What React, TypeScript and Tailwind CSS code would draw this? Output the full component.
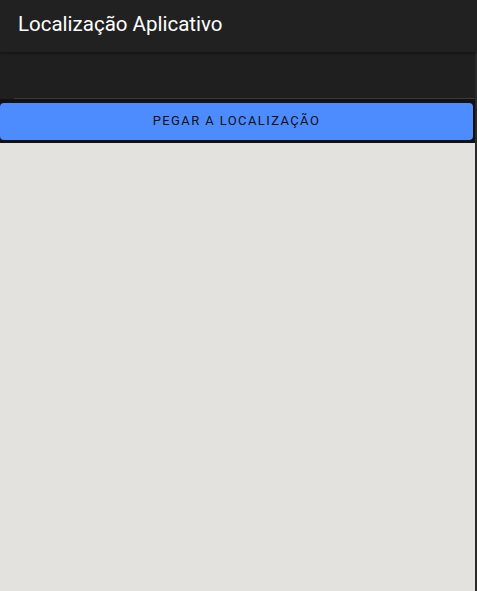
export default function App() {
  return (
    <div
      className="h-[591px] w-[477px] flex flex-col bg-[#1f1f1f] overflow-hidden"
      style={{ fontFamily: "Roboto, 'Liberation Sans', sans-serif" }}
    >
      <header className="h-[52px] flex-none flex items-center px-[18px] pb-[4px] bg-[#212121] shadow-[0_1px_3px_rgba(0,0,0,0.5)] z-10">
        <h1 className="text-[20.5px] font-normal text-white">Localização Aplicativo</h1>
      </header>
      <div className="flex-1 flex flex-row">
        <div className="flex-1 flex flex-col">
          <div className="h-[47px] flex-none bg-[#1f1f1f] flex flex-col justify-end">
            <div className="ml-[14px] border-b border-[#3a3a3a]"></div>
          </div>
          <div className="h-[44px] flex-none bg-[#121212] flex items-center pr-[2px]">
            <button className="w-full h-[37px] rounded-[4px] bg-[#4d8cff] text-[#111] text-[13px] tracking-[1.4px] uppercase">
              Pegar a localização
            </button>
          </div>
          <div className="flex-1 bg-[#e4e2df]"></div>
        </div>
        <div className="w-[2px] flex-none bg-[#2a2a2a]"></div>
      </div>
    </div>
  );
}
